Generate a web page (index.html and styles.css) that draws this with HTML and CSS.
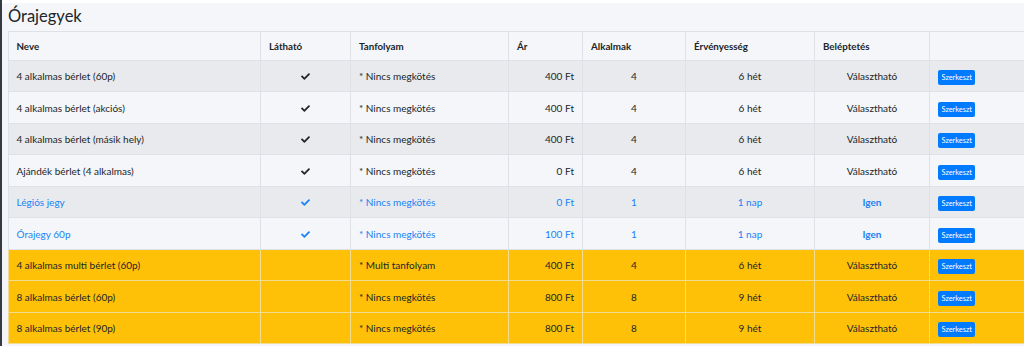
FILE: index.html
```html
<!DOCTYPE html>
<html lang="hu">
<head>
<meta charset="utf-8">
<title>Órajegyek</title>
<link rel="stylesheet" href="styles.css">
</head>
<body>
<div class="layout">
  <div class="sidebar-edge"></div>
  <div class="main">
    <div class="topbar"></div>
    <div class="content">
      <h1 class="page-title">Órajegyek</h1>
      <table class="tickets">
        <colgroup>
          <col class="c-name"><col class="c-vis"><col class="c-course"><col class="c-price"><col class="c-count"><col class="c-valid"><col class="c-entry"><col class="c-act">
        </colgroup>
        <thead>
          <tr><th>Neve</th><th>Látható</th><th>Tanfolyam</th><th>Ár</th><th>Alkalmak</th><th>Érvényesség</th><th>Beléptetés</th><th></th></tr>
        </thead>
        <tbody>
          <tr class="odd">
            <td>4 alkalmas bérlet (60p)</td><td class="center"><svg class="check" viewBox="0 0 512 512"><path d="M173.898 439.404l-166.4-166.4c-9.997-9.997-9.997-26.206 0-36.204l36.203-36.204c9.997-9.998 26.207-9.998 36.204 0L192 312.69 432.095 72.596c9.997-9.997 26.207-9.997 36.204 0l36.203 36.204c9.997 9.997 9.997 26.206 0 36.204l-294.4 294.401c-9.998 9.997-26.207 9.997-36.204-.001z"/></svg></td><td>* Nincs megkötés</td><td class="right">400 Ft</td><td class="center">4</td><td class="center">6 hét</td><td class="center">Választható</td><td><span class="btn-edit">Szerkeszt</span></td>
          </tr>
          <tr>
            <td>4 alkalmas bérlet (akciós)</td><td class="center"><svg class="check" viewBox="0 0 512 512"><path d="M173.898 439.404l-166.4-166.4c-9.997-9.997-9.997-26.206 0-36.204l36.203-36.204c9.997-9.998 26.207-9.998 36.204 0L192 312.69 432.095 72.596c9.997-9.997 26.207-9.997 36.204 0l36.203 36.204c9.997 9.997 9.997 26.206 0 36.204l-294.4 294.401c-9.998 9.997-26.207 9.997-36.204-.001z"/></svg></td><td>* Nincs megkötés</td><td class="right">400 Ft</td><td class="center">4</td><td class="center">6 hét</td><td class="center">Választható</td><td><span class="btn-edit">Szerkeszt</span></td>
          </tr>
          <tr class="odd">
            <td>4 alkalmas bérlet (másik hely)</td><td class="center"><svg class="check" viewBox="0 0 512 512"><path d="M173.898 439.404l-166.4-166.4c-9.997-9.997-9.997-26.206 0-36.204l36.203-36.204c9.997-9.998 26.207-9.998 36.204 0L192 312.69 432.095 72.596c9.997-9.997 26.207-9.997 36.204 0l36.203 36.204c9.997 9.997 9.997 26.206 0 36.204l-294.4 294.401c-9.998 9.997-26.207 9.997-36.204-.001z"/></svg></td><td>* Nincs megkötés</td><td class="right">400 Ft</td><td class="center">4</td><td class="center">6 hét</td><td class="center">Választható</td><td><span class="btn-edit">Szerkeszt</span></td>
          </tr>
          <tr>
            <td>Ajándék bérlet (4 alkalmas)</td><td class="center"><svg class="check" viewBox="0 0 512 512"><path d="M173.898 439.404l-166.4-166.4c-9.997-9.997-9.997-26.206 0-36.204l36.203-36.204c9.997-9.998 26.207-9.998 36.204 0L192 312.69 432.095 72.596c9.997-9.997 26.207-9.997 36.204 0l36.203 36.204c9.997 9.997 9.997 26.206 0 36.204l-294.4 294.401c-9.998 9.997-26.207 9.997-36.204-.001z"/></svg></td><td>* Nincs megkötés</td><td class="right">0 Ft</td><td class="center">4</td><td class="center">6 hét</td><td class="center">Választható</td><td><span class="btn-edit">Szerkeszt</span></td>
          </tr>
          <tr class="odd primary">
            <td>Légiós jegy</td><td class="center"><svg class="check" viewBox="0 0 512 512"><path d="M173.898 439.404l-166.4-166.4c-9.997-9.997-9.997-26.206 0-36.204l36.203-36.204c9.997-9.998 26.207-9.998 36.204 0L192 312.69 432.095 72.596c9.997-9.997 26.207-9.997 36.204 0l36.203 36.204c9.997 9.997 9.997 26.206 0 36.204l-294.4 294.401c-9.998 9.997-26.207 9.997-36.204-.001z"/></svg></td><td>* Nincs megkötés</td><td class="right">0 Ft</td><td class="center">1</td><td class="center">1 nap</td><td class="center bold">Igen</td><td><span class="btn-edit">Szerkeszt</span></td>
          </tr>
          <tr class="primary">
            <td>Órajegy 60p</td><td class="center"><svg class="check" viewBox="0 0 512 512"><path d="M173.898 439.404l-166.4-166.4c-9.997-9.997-9.997-26.206 0-36.204l36.203-36.204c9.997-9.998 26.207-9.998 36.204 0L192 312.69 432.095 72.596c9.997-9.997 26.207-9.997 36.204 0l36.203 36.204c9.997 9.997 9.997 26.206 0 36.204l-294.4 294.401c-9.998 9.997-26.207 9.997-36.204-.001z"/></svg></td><td>* Nincs megkötés</td><td class="right">100 Ft</td><td class="center">1</td><td class="center">1 nap</td><td class="center bold">Igen</td><td><span class="btn-edit">Szerkeszt</span></td>
          </tr>
          <tr class="warning">
            <td>4 alkalmas multi bérlet (60p)</td><td></td><td>* Multi tanfolyam</td><td class="right">400 Ft</td><td class="center">4</td><td class="center">6 hét</td><td class="center">Választható</td><td><span class="btn-edit">Szerkeszt</span></td>
          </tr>
          <tr class="warning">
            <td>8 alkalmas bérlet (60p)</td><td></td><td>* Nincs megkötés</td><td class="right">800 Ft</td><td class="center">8</td><td class="center">9 hét</td><td class="center">Választható</td><td><span class="btn-edit">Szerkeszt</span></td>
          </tr>
          <tr class="warning">
            <td>8 alkalmas bérlet (90p)</td><td></td><td>* Nincs megkötés</td><td class="right">800 Ft</td><td class="center">8</td><td class="center">9 hét</td><td class="center">Választható</td><td><span class="btn-edit">Szerkeszt</span></td>
          </tr>
        </tbody>
      </table>
    </div>
  </div>
</div>
</body>
</html>
```

FILE: styles.css
```css
html, body {
  margin: 0;
  padding: 0;
  height: 100%;
  overflow: hidden;
  background: #f4f6f9;
}

body {
  font-family: Lato, "Liberation Sans", sans-serif;
  color: #212529;
}

.layout {
  display: flex;
  height: 100%;
}

.sidebar-edge {
  width: 2px;
  flex: 0 0 2px;
  background: #343a40;
}

.main {
  flex: 1;
  min-width: 0;
  display: flex;
  flex-direction: column;
}

.topbar {
  height: 3px;
  background: #ffffff;
}

.content {
  padding-left: 5.5px;
}

.page-title {
  margin: 0;
  font-size: 16.5px;
  font-weight: 400;
  line-height: 27.7px;
  padding-left: 0.5px;
  color: #212529;
}

.tickets {
  border-collapse: collapse;
  table-layout: fixed;
  width: 1030px;
  font-size: 10px;
}

.c-name { width: 252.5px; }
.c-vis { width: 90px; }
.c-course { width: 158px; }
.c-price { width: 74px; }
.c-count { width: 103px; }
.c-valid { width: 129px; }
.c-entry { width: 115px; }
.c-act { width: 108.5px; }

.tickets th,
.tickets td {
  border: 1px solid #dee2e6;
  padding: 5.25px 8px;
  line-height: 20px;
  text-align: left;
  vertical-align: middle;
  white-space: nowrap;
  overflow: hidden;
}

.tickets th {
  font-weight: 700;
  font-size: 9.75px;
  padding-top: 4.15px;
  padding-bottom: 4.15px;
}

.tickets .center { text-align: center; }
.tickets .right { text-align: right; }
.tickets .bold { font-weight: 700; }

.tickets tr.odd { background: #e8eaed; }

.tickets tr.primary { color: #1a82f7; }
.tickets tr.primary .check { fill: #1a82f7; }

.tickets tr.warning { background: #ffc107; }
.tickets tr.warning td { border-color: #f3dc8f; }

.check {
  width: 11px;
  height: 9px;
  fill: #212529;
  vertical-align: -1px;
}

.btn-edit {
  display: inline-block;
  background: #007bff;
  color: #ffffff;
  font-size: 7.4px;
  line-height: 15px;
  height: 15px;
  padding: 0 3.5px;
  border-radius: 2px;
  vertical-align: middle;
}
```
